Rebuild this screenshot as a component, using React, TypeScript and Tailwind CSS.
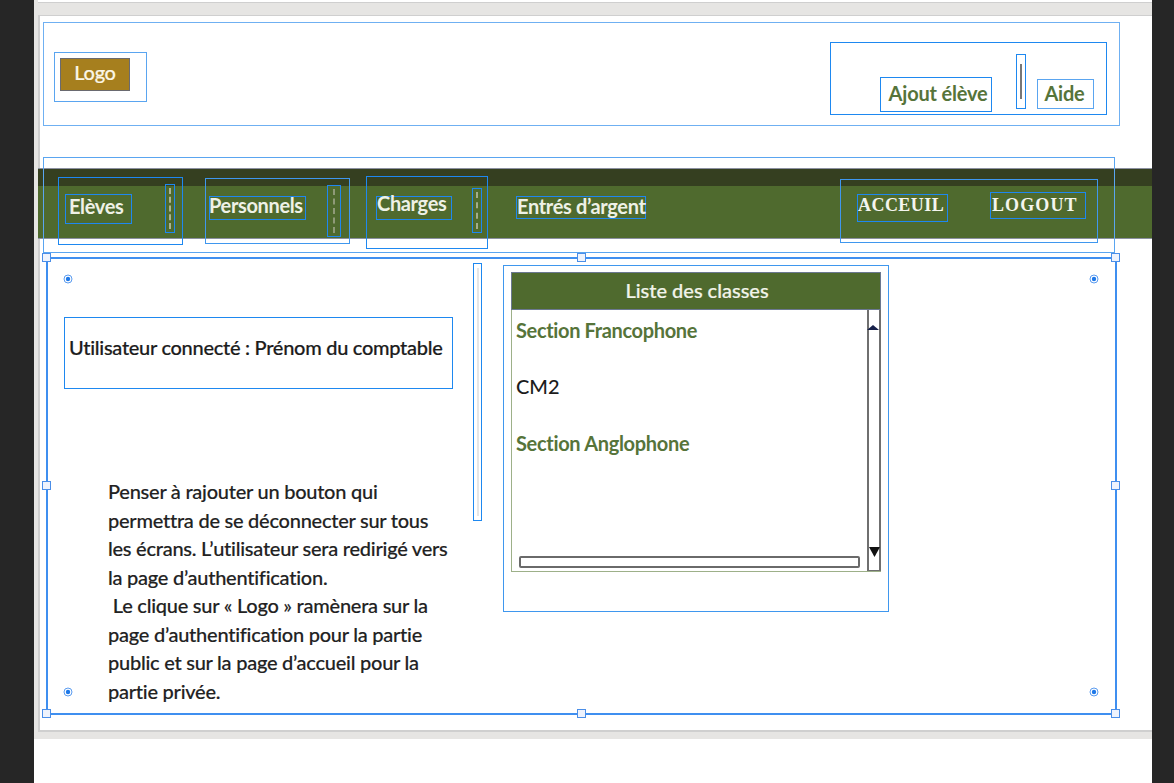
const PARAGRAPH = [
  "Penser à rajouter un bouton qui",
  "permettra de se déconnecter sur tous",
  "les écrans. L’utilisateur sera redirigé vers",
  "la page d’authentification.",
  "\u00a0Le clique sur « Logo » ramènera sur la",
  "page d’authentification pour la partie",
  "public et sur la page d’accueil pour la",
  "partie privée.",
];

function Handle({ className }: { className: string }) {
  return <div className={`absolute size-[9px] border border-[#4a8ee8] bg-[#eef3fd] ${className}`} />;
}

function Anchor({ className }: { className: string }) {
  return (
    <svg viewBox="0 0 10 10" className={`absolute size-[10px] ${className}`}>
      <circle cx="5" cy="5" r="4" fill="#fff" stroke="#5b9cf0" strokeWidth="1" />
      <circle cx="5" cy="5" r="2.2" fill="#1e78e8" />
    </svg>
  );
}

function NavSep({ className, line }: { className: string; line: string }) {
  return (
    <div className={`flex shrink-0 justify-center border border-[#1e88f0] py-[3px] ${className}`}>
      <div className={`h-full border-l-2 border-dashed ${line}`} />
    </div>
  );
}

const navText =
  "shrink-0 whitespace-nowrap border border-[#1e88f0] text-[20px] font-bold tracking-[-0.35px] text-[#eef1e6]";
const serifText =
  "shrink-0 whitespace-nowrap border border-[#1e88f0] font-['Liberation_Serif',serif] text-[18px] font-bold text-[#f4f5ee]";

export default function App() {
  return (
    <div className="flex h-[783px] w-[1174px] overflow-hidden bg-white">
      <div className="w-[34px] bg-[#262626]" />

      <div className="flex min-w-0 flex-1 flex-col">
        <div className="h-[739px] bg-[#e6e5e3] pl-[4px]">
          <div className="h-[3px] border-b border-[#cfcfcf] bg-white" />

          {/* Artboard */}
          <div className="mt-[12px] flex h-[717px] flex-col bg-white pl-[5px] pt-[7px] font-['Lato','Liberation_Sans',sans-serif] text-[#1f1f1f] shadow-[inset_2px_1px_0_#cfcfcf,inset_0_-2px_0_#cfcfcf]">
            {/* Header */}
            <div className="flex h-[104px] w-[1077px] shrink-0 justify-between border border-[#6fb0f2] pl-[10px] pr-[12px]">
              <div className="mt-[29px] h-[50px] w-[93px] border border-[#5aa5f0] p-[5px]">
                <div className="flex h-[33px] w-[70px] items-center justify-center border border-[#6a6a70] bg-[#a67f1e] pb-[5px] text-[20px] font-medium tracking-[-0.3px] text-[#fbf6e6] [-webkit-text-stroke:0.2px]">
                  Logo
                </div>
              </div>
              <div className="mt-[19px] flex h-[73px] w-[277px] border border-[#1e88f0] pl-[49px] text-[20px] font-bold tracking-[-0.2px] text-[#56743a]">
                <div className="mt-[34px] flex h-[35px] w-[112px] shrink-0 items-center justify-center whitespace-nowrap border border-[#1e88f0] pb-[4px] pl-[4px]">
                  Ajout élève
                </div>
                <div className="ml-[24px] mt-[11px] flex h-[55px] w-[10px] shrink-0 justify-center border border-[#1e88f0] py-[9px]">
                  <div className="w-[2px] bg-[#777777]" />
                </div>
                <div className="ml-[11px] mt-[36px] flex h-[30px] w-[57px] shrink-0 items-center justify-center border border-[#5aa5f0] pb-[3px] pr-[2px]">
                  Aide
                </div>
              </div>
            </div>

            {/* Nav band */}
            <div className="relative -ml-[5px] mt-[42px] flex h-[71px] shrink-0 items-start bg-[linear-gradient(#353f20_18px,#4f6a2e_18px)] pl-[20px] shadow-[inset_0_1px_0_#8b90a0,inset_0_-1px_0_#8b90a0]">
              <div className="absolute left-[5px] top-[-11px] h-[96px] w-[1072px] border border-[#5aa5f0]" />

              <div className="relative mt-[9px] flex h-[68px] w-[125px] shrink-0 items-start border border-[#1e88f0] pl-[6px]">
                <div className={`${navText} mt-[16px] h-[30px] w-[67px] pl-[3px] leading-[22px]`}>Elèves</div>
                <NavSep className="ml-[33px] mt-[6px] h-[49px] w-[10px]" line="border-[#a9b396]" />
              </div>

              <div className="relative ml-[22px] mt-[10px] flex h-[66px] w-[145px] shrink-0 items-start border border-[#3f97ee] pl-[3px]">
                <div className={`${navText} mt-[17px] h-[24px] w-[97px] indent-[-1px] leading-[17px]`}>Personnels</div>
                <NavSep className="ml-[21px] mt-[6px] h-[52px] w-[14px]" line="border-[#8f9a78]" />
              </div>

              <div className="relative ml-[16px] mt-[8px] flex h-[73px] w-[122px] shrink-0 items-start border border-[#1e88f0] pl-[9px]">
                <div className={`${navText} mt-[19px] h-[24px] w-[76px] leading-[13px]`}>Charges</div>
                <NavSep className="ml-[20px] mt-[11px] h-[45px] w-[10px]" line="border-[#a3ad8c]" />
              </div>

              <div className={`${navText} relative ml-[28px] mt-[28px] h-[23px] w-[130px] leading-[18px]`}>
                Entrés d’argent
              </div>

              <div className="relative ml-auto mr-[54px] mt-[11px] flex h-[64px] w-[258px] shrink-0 items-start border border-[#3f97ee] pl-[16px]">
                <div className={`${serifText} mt-[14px] h-[28px] w-[91px] leading-[20px] tracking-[0.45px]`}>ACCEUIL</div>
                <div className={`${serifText} ml-[42px] mt-[12px] h-[27px] w-[96px] pl-[1px] leading-[24px] tracking-[1.1px]`}>LOGOUT</div>
              </div>
            </div>

            {/* Selected frame */}
            <div className="relative ml-[3px] mt-[18px] flex h-[458px] w-[1071px] shrink-0 items-start border-2 border-[#3f8ff0]">
              <Handle className="left-[-6px] top-[-6px]" />
              <Handle className="left-[529px] top-[-6px]" />
              <Handle className="left-[1063px] top-[-6px]" />
              <Handle className="left-[-6px] top-[222px]" />
              <Handle className="left-[1063px] top-[222px]" />
              <Handle className="left-[-6px] top-[450px]" />
              <Handle className="left-[529px] top-[450px]" />
              <Handle className="left-[1063px] top-[450px]" />
              <Anchor className="left-[15px] top-[15px]" />
              <Anchor className="left-[1041px] top-[15px]" />
              <Anchor className="left-[15px] top-[428px]" />
              <Anchor className="left-[1041px] top-[428px]" />

              <div className="flex w-[425px] shrink-0 flex-col pl-[16px] pt-[58px]">
                <div className="flex h-[72px] w-[389px] items-center whitespace-nowrap border border-[#1e88f0] pb-[13px] pl-[4px] text-[20px] font-medium tracking-[-0.28px] text-[#1c1c1c] [-webkit-text-stroke:0.2px]">
                  Utilisateur connecté : Prénom du comptable
                </div>
                <div className="ml-[44px] mt-[88px] text-[20px] font-medium leading-[28.5px] tracking-[-0.25px] text-[#222222] [-webkit-text-stroke:0.15px]">
                  {PARAGRAPH.map((line) => (
                    <p key={line} className="whitespace-nowrap">
                      {line}
                    </p>
                  ))}
                </div>
              </div>

              <div className="mt-[4px] flex h-[258px] w-[9px] shrink-0 justify-center border border-[#1e88f0] py-[4px]">
                <div className="w-[2px] bg-[#e6e6e6]" />
              </div>

              {/* Liste des classes */}
              <div className="ml-[21px] mt-[6px] h-[347px] w-[386px] shrink-0 border border-[#3f97ee] px-[7px] pt-[6px]">
                <div className="flex h-[300px] w-[370px] flex-col">
                  <div className="flex h-[38px] shrink-0 items-center justify-center border border-[#6b7890] bg-[#4f6a2e] pb-[3px] pl-[2px] text-[20px] font-medium tracking-[0px] text-[#f2f4ea] [-webkit-text-stroke:0.2px]">
                    Liste des classes
                  </div>
                  <div className="flex min-h-0 flex-1 border-b border-l border-[#9db089]">
                    <div className="flex min-w-0 flex-1 flex-col pl-[4px] pr-[7px] text-[20px] leading-[28px]">
                      <p className="mt-[6px] font-bold tracking-[-0.35px] text-[#56743a]">Section Francophone</p>
                      <p className="mt-[28px] font-medium text-[#1c1c1c]">CM2</p>
                      <p className="mt-[29px] font-bold tracking-[-0.32px] text-[#56743a]">Section Anglophone</p>
                      <div className="mb-[3px] ml-[3px] mt-auto h-[12px] rounded-[2px] border-2 border-[#6a6a6a] bg-white" />
                    </div>
                    <div className="flex w-[14px] shrink-0 flex-col items-center justify-between border-x-2 border-b border-[#6f6f6f] pb-[13px] pt-[15px]">
                      <svg viewBox="0 0 12 5" className="mr-[3px] h-[5px] w-[12px] shrink-0">
                        <polygon points="6,0 12,5 0,5" fill="#16204a" />
                      </svg>
                      <svg viewBox="0 0 11 10" className="ml-[1px] h-[10px] w-[11px] shrink-0">
                        <polygon points="0,0 11,0 5.5,10" fill="#111111" />
                      </svg>
                    </div>
                  </div>
                </div>
              </div>
            </div>
          </div>
        </div>
        <div className="flex-1 bg-white" />
      </div>

      <div className="w-[22px] bg-[#262626]" />
    </div>
  );
}
